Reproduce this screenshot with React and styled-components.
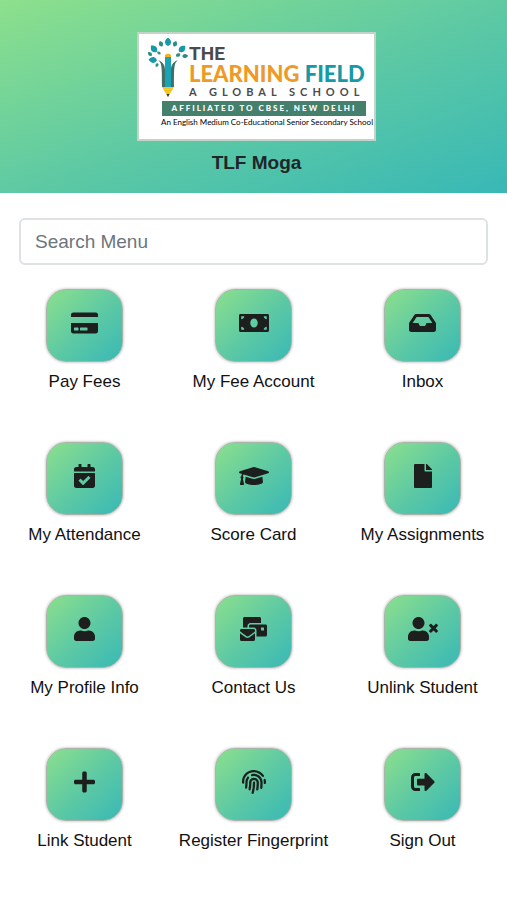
import { useState } from "react";
import styled, { createGlobalStyle } from "styled-components";
import {
  FaCalendarCheck,
  FaCreditCard,
  FaFile,
  FaFingerprint,
  FaGraduationCap,
  FaInbox,
  FaMailBulk,
  FaMoneyBill,
  FaPlus,
  FaSignOutAlt,
  FaUser,
  FaUserTimes,
} from "react-icons/fa";

const GlobalStyle = createGlobalStyle`
  * {
    box-sizing: border-box;
  }
  body {
    margin: 0;
    background-color: #fff;
    color: #212529;
    font-family: "Liberation Sans", Arial, sans-serif;
  }
`;

const Header = styled.header`
  display: flex;
  flex-direction: column;
  align-items: center;
  padding: 32px 0 18px 6px;
  background: linear-gradient(to bottom right, #8de08c, #5fcaa3 50%, #38b8b6);
`;
const Logo = styled.div`
  width: 239px;
  height: 109px;
  padding: 4px 8px 0 9px;
  border: 2px solid #c3d3c8;
  background-color: #fff;
`;
const LogoTop = styled.div`
  display: flex;
  gap: 1px;
  height: 63px;
`;
const Tree = styled.svg`
  flex: none;
  width: 40px;
  height: 60px;
`;
const LogoWords = styled.div`
  padding-top: 6px;
  font-family: Lato, sans-serif;
  color: #4b4b4d;
  white-space: nowrap;
`;
const The = styled.div`
  font-family: Roboto, sans-serif;
  font-size: 19px;
  line-height: 20px;
  font-weight: 700;
`;
const LearningField = styled.div`
  font-size: 22px;
  line-height: 20px;
  font-weight: 900;
  color: #ee9a28;

  span {
    color: #169aa8;
  }
`;
const GlobalSchool = styled.div`
  font-size: 11px;
  line-height: 15px;
  font-weight: 700;
  letter-spacing: 5px;
`;
const Affiliated = styled.div`
  height: 15px;
  margin-left: 14px;
  background-color: #44806c;
  color: #fff;
  font-family: Lato, sans-serif;
  font-size: 8px;
  line-height: 15px;
  font-weight: 900;
  letter-spacing: 2px;
  text-align: center;
  white-space: nowrap;
`;
const Motto = styled.div`
  margin-left: 13px;
  color: #000;
  font-family: Lato, sans-serif;
  font-size: 8px;
  line-height: 13px;
  white-space: nowrap;
`;
const SchoolName = styled.h1`
  margin: 10px 0 0;
  font-size: 19px;
  line-height: 24px;
  font-weight: 700;
`;
const Search = styled.input`
  display: block;
  width: calc(100% - 38px);
  height: 47px;
  margin: 25px 19px 0;
  padding: 0 14px;
  border: 2px solid #dee2e6;
  border-radius: 6px;
  font-family: inherit;
  font-size: 19px;
  color: #212529;

  &::placeholder {
    color: #6c757d;
    opacity: 1;
  }
`;
const Menu = styled.nav`
  display: grid;
  grid-template-columns: repeat(3, 1fr);
  grid-auto-rows: 153px;
  padding-top: 24px;
`;
const MenuItem = styled.button`
  display: flex;
  flex-direction: column;
  align-items: center;
  gap: 8px;
  padding: 0;
  border: 0;
  background: none;
  color: #111;
  font-family: inherit;
  font-size: 17px;
  line-height: 24px;
  white-space: nowrap;
  cursor: pointer;
`;
const Tile = styled.span`
  display: flex;
  justify-content: center;
  align-items: center;
  width: 77px;
  height: 73px;
  padding-bottom: 5px;
  border: 1px solid #a9b5ab;
  border-radius: 20px;
  background: linear-gradient(to bottom right, #8de08c, #5fcaa3 50%, #38b8b6) border-box;
  box-shadow: 0 0 3px rgba(0, 0, 0, 0.35);
  color: #1c1f1e;

  svg {
    width: ${({ $iconWidth }) => $iconWidth}px;
    height: 24px;
  }
`;

const items = [
  { label: "Pay Fees", icon: FaCreditCard, width: 27 },
  { label: "My Fee Account", icon: FaMoneyBill, width: 30 },
  { label: "Inbox", icon: FaInbox, width: 27 },
  { label: "My Attendance", icon: FaCalendarCheck, width: 21 },
  { label: "Score Card", icon: FaGraduationCap, width: 30 },
  { label: "My Assignments", icon: FaFile, width: 18 },
  { label: "My Profile Info", icon: FaUser, width: 21 },
  { label: "Contact Us", icon: FaMailBulk, width: 27 },
  { label: "Unlink Student", icon: FaUserTimes, width: 30 },
  { label: "Link Student", icon: FaPlus, width: 21 },
  { label: "Register Fingerprint", icon: FaFingerprint, width: 24 },
  { label: "Sign Out", icon: FaSignOutAlt, width: 24 },
];

// x, y, rotation, scale and colour of each leaf on the tree
const leaves = [
  [20, 4, 0, 1, "#169aa8"],
  [13, 6, -20, 0.7, "#2d8f83"],
  [27, 6, 20, 0.7, "#2d8f83"],
  [6, 11, -40, 1, "#169aa8"],
  [34, 11, 45, 1, "#169aa8"],
  [11, 15, -50, 0.5, "#2d8f83"],
  [30, 17, 60, 0.6, "#2d8f83"],
  [2, 16, -45, 0.6, "#2d8f83"],
  [5, 22, -85, 1, "#169aa8"],
  [37, 18, 85, 0.7, "#2d8f83"],
  [9, 27, -150, 0.5, "#2d8f83"],
];

const SchoolTree = () => (
  <Tree viewBox="0 0 40 60" aria-hidden="true">
    {leaves.map(([x, y, turn, size, fill]) => (
      <path
        key={`${x}-${y}`}
        d="M0-4.500C4-1.500 4 2 0 4C-4 2-4-1.500 0-4.500Z"
        transform={`translate(${x} ${y}) rotate(${turn}) scale(${size})`}
        fill={fill}
      />
    ))}
    <path d="M10 22C14 25 14 29 14 49H17V32C17 27 15 24 10 22Z" fill="#3f6f67" />
    <path d="M30 22C26 25 26 29 26 49H23V32C23 27 25 24 30 22Z" fill="#3f6f67" />
    <path d="M17 19H23V49H17Z" fill="#19a3b5" />
    <path d="M17 17Q20 14 23 17V19H17Z" fill="#f3b21b" />
    <path d="M14 49H26L20 59Z" fill="#f7c325" />
    <path d="M18.500 56H21.500L20 59Z" fill="#333" />
  </Tree>
);

const App = () => {
  const [search, setSearch] = useState("");
  const shown = items.filter(({ label }) =>
    label.toLowerCase().includes(search.toLowerCase())
  );

  return (
    <>
      <GlobalStyle />
      <Header>
        <Logo>
          <LogoTop>
            <SchoolTree />
            <LogoWords>
              <The>THE</The>
              <LearningField>
                LEARNING <span>FIELD</span>
              </LearningField>
              <GlobalSchool>A GLOBAL SCHOOL</GlobalSchool>
            </LogoWords>
          </LogoTop>
          <Affiliated>AFFILIATED TO CBSE, NEW DELHI</Affiliated>
          <Motto>An English Medium Co-Educational Senior Secondary School</Motto>
        </Logo>
        <SchoolName>TLF Moga</SchoolName>
      </Header>
      <main>
        <Search
          type="text"
          aria-label="Search Menu"
          placeholder="Search Menu"
          value={search}
          onChange={(e) => setSearch(e.target.value)}
        />
        <Menu>
          {shown.map(({ label, icon: Icon, width }) => (
            <MenuItem key={label} type="button">
              <Tile $iconWidth={width}>
                <Icon />
              </Tile>
              {label}
            </MenuItem>
          ))}
        </Menu>
      </main>
    </>
  );
};

export default App;
